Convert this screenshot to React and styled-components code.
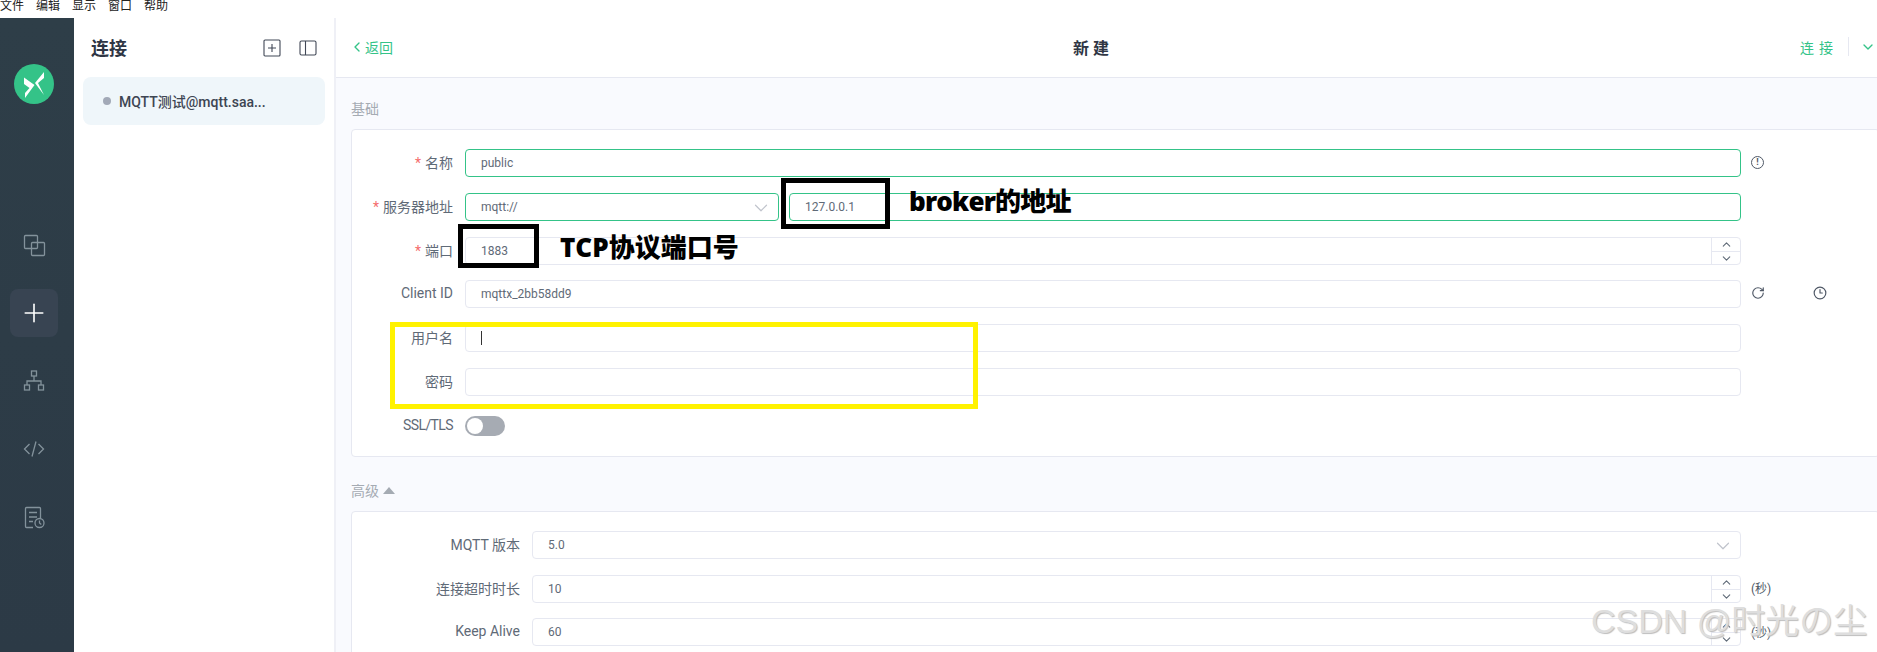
import React from "react";
import styled, { createGlobalStyle } from "styled-components";
import { ChevronLeft, ChevronDown, ChevronUp, RotateCw, Clock3, Plus } from "lucide-react";

const sans = `Roboto, "Noto Sans CJK SC", sans-serif`;

const GlobalStyle = createGlobalStyle`
  html, body {
    margin: 0;
    padding: 0;
    background: #fff;
    font-family: ${sans};
  }
  * {
    box-sizing: border-box;
  }
`;

const Page = styled.div`
  position: relative;
  width: 1877px;
  height: 652px;
  overflow: hidden;
  display: flex;
  flex-direction: column;
`;

const MenuBar = styled.div`
  height: 18px;
  flex: none;
  display: flex;
  background: #fff;
  overflow: hidden;
`;

const MenuItem = styled.span`
  width: 36px;
  font-size: 12px;
  line-height: 12px;
  color: #222;
`;

const Shell = styled.div`
  flex: 1;
  display: flex;
  min-height: 0;
`;

const Sidebar = styled.div`
  width: 74px;
  flex: none;
  display: flex;
  flex-direction: column;
  align-items: center;
  background: linear-gradient(180deg, #2e3e48 0%, #2c3a46 100%);
  padding: 46px 6px 0 0;
`;

const Logo = styled.svg`
  width: 40px;
  height: 40px;
  margin-bottom: 117px;
`;

const NavButton = styled.div`
  width: 48px;
  height: 48px;
  margin-bottom: 20px;
  border-radius: 8px;
  display: flex;
  align-items: center;
  justify-content: center;
  color: ${(p) => (p.$active ? "#fff" : "#83929b")};
  background: ${(p) => (p.$active ? "#384452" : "transparent")};
`;

const NavIcon = styled.svg`
  width: 24px;
  height: 24px;
  fill: none;
  stroke: currentColor;
  stroke-width: 1.3;
`;

const ListPanel = styled.div`
  width: 260px;
  flex: none;
  background: #fff;
  padding: 0 9px;
`;

const ListHeader = styled.div`
  height: 59px;
  display: flex;
  align-items: center;
  padding: 0 8px;
`;

const ListTitle = styled.h1`
  flex: 1;
  margin: 0 0 2px;
  font-size: 18px;
  font-weight: 700;
  color: #2f3644;
`;

const HeadIcon = styled.svg`
  width: 18px;
  height: 18px;
  margin-left: 18px;
  fill: none;
  stroke: #414856;
  stroke-width: 1.1;
`;

const ConnItem = styled.div`
  height: 48px;
  border-radius: 8px;
  background: #eff6fa;
  display: flex;
  align-items: center;
  padding-left: 20px;
  font-size: 14px;
  font-weight: 500;
  color: #3d4552;
`;

const StatusDot = styled.i`
  width: 8px;
  height: 8px;
  margin-right: 8px;
  border-radius: 50%;
  background: #a2a9b7;
`;

const Main = styled.div`
  flex: 1;
  min-width: 0;
  display: flex;
  flex-direction: column;
  border-left: 2px solid #eff0f6;
  background: #f9fafe;
`;

const TopBar = styled.div`
  height: 60px;
  flex: none;
  display: grid;
  grid-template-columns: 724px auto 1fr;
  align-items: center;
  background: #fff;
  border-bottom: 1px solid #e6e8f1;
  padding: 0 1px 2px 13px;
`;

const BackLink = styled.div`
  display: flex;
  align-items: center;
  font-size: 14px;
  color: #34c388;
`;

const PageTitle = styled.div`
  font-size: 16px;
  font-weight: 700;
  letter-spacing: 4px;
  color: #2f3644;
`;

const ConnectArea = styled.div`
  display: flex;
  align-items: center;
  justify-content: flex-end;
  font-size: 14px;
  letter-spacing: 5px;
  color: #34c388;
`;

const Separator = styled.span`
  width: 1px;
  height: 19px;
  margin: 0 11px 0 10px;
  background: #e6e8f1;
`;

const Body = styled.div`
  flex: 1;
  min-height: 0;
  padding: 21px 0 0 15px;
`;

const SectionLabel = styled.div`
  height: 20px;
  margin: ${(p) => (p.$advanced ? "24px 0 10px" : "0 0 10px")};
  display: flex;
  align-items: center;
  gap: 4px;
  font-size: 14px;
  line-height: 20px;
  color: #a5abb3;
`;

const Caret = styled.i`
  width: 0;
  height: 0;
  border-left: 6px solid transparent;
  border-right: 6px solid transparent;
  border-bottom: 7px solid #a5abb3;
`;

const Card = styled.div`
  margin-right: -3px;
  padding: 19px 0 16px;
  display: flex;
  flex-direction: column;
  gap: 15.8px;
  background: #fff;
  border: 1px solid #e6e8f1;
  border-radius: 4px;
`;

const Row = styled.div`
  display: grid;
  grid-template-columns: ${(p) => p.$labelWidth}px minmax(0, 1fr) 128px;
  column-gap: 10px;
  align-items: center;
  height: 28px;
`;

const Label = styled.div`
  margin-bottom: 2px;
  padding-right: 2px;
  text-align: right;
  font-size: 14px;
  letter-spacing: ${(p) => (p.$tight ? "-0.6px" : "0")};
  color: #5f6a77;
  white-space: nowrap;
`;

const Required = styled.span`
  color: #f56c6c;
  margin-right: 4px;
`;

const Fields = styled.div`
  display: flex;
  gap: 10px;
  min-width: 0;
`;

const Field = styled.div`
  position: relative;
  flex: ${(p) => (p.$width ? `0 0 ${p.$width}px` : "1")};
  height: 28px;
  display: flex;
  align-items: center;
  padding-left: 15px;
  border: 1px solid ${(p) => (p.$focus ? "#34c388" : "#e6e8f1")};
  border-radius: 4px;
  background: #fff;
  font-size: 12px;
  color: #5f6a77;
`;

const TextCaret = styled.i`
  width: 1px;
  height: 14px;
  background: #333;
`;

const SelectArrow = styled(ChevronDown)`
  position: absolute;
  right: 6px;
  top: 3px;
  width: 22px;
  height: 22px;
  color: #c0c4cc;
  stroke-width: 1.3;
`;

const Stepper = styled.div`
  position: absolute;
  top: 0;
  right: 0;
  bottom: 0;
  width: 29px;
  display: flex;
  flex-direction: column;
  border-left: 1px solid #e6e8f1;
`;

const StepButton = styled.div`
  flex: 1;
  display: flex;
  align-items: center;
  justify-content: center;
  color: #5f6a77;
  & + & {
    border-top: 1px solid #e6e8f1;
  }
`;

const Aux = styled.div`
  display: flex;
  align-items: center;
  gap: 48px;
  margin-bottom: 2px;
  color: #4f5866;
  font-size: 12px;
`;

const InfoMark = styled.span`
  width: 13px;
  height: 13px;
  border: 1.5px solid #4f5866;
  border-radius: 50%;
  font-size: 9px;
  line-height: 10px;
  font-weight: 700;
  text-align: center;
`;

const Toggle = styled.div`
  position: relative;
  width: 40px;
  height: 20px;
  border-radius: 10px;
  background: #a6abb3;
  &::after {
    content: "";
    position: absolute;
    left: 2px;
    top: 2px;
    width: 16px;
    height: 16px;
    border-radius: 50%;
    background: #fff;
  }
`;

const Frame = styled.div`
  position: absolute;
  left: ${(p) => p.$x}px;
  top: ${(p) => p.$y}px;
  width: ${(p) => p.$w}px;
  height: ${(p) => p.$h}px;
  border: 5px solid ${(p) => p.$color};
`;

const Note = styled.div`
  position: absolute;
  left: ${(p) => p.$x}px;
  top: ${(p) => p.$y}px;
  font-size: 26px;
  line-height: 32px;
  font-weight: 800;
  letter-spacing: ${(p) => (p.$tight ? "-0.8px" : "0")};
  color: #000;
  font-family: "Open Sans", "Noto Sans CJK SC", sans-serif;
  white-space: nowrap;
`;

const Watermark = styled.div`
  position: absolute;
  left: 1591px;
  top: 599px;
  font-size: 34px;
  line-height: 44px;
  font-family: "Liberation Sans", "Noto Sans CJK JP", sans-serif;
  color: #dedede;
  text-shadow: 1px 1px 1px #bdbdbd;
  white-space: nowrap;
`;

const navIcons = [
  <>
    <rect x="2.5" y="2.5" width="13" height="13" rx="1" />
    <rect x="9.5" y="9.5" width="13" height="13" rx="1" />
  </>,
  null,
  <>
    <rect x="9.5" y="2" width="5" height="5" />
    <rect x="2.5" y="16" width="5" height="5" />
    <rect x="16.5" y="16" width="5" height="5" />
    <path d="M12 7v5M5 16v-4h14v4" />
  </>,
  <path d="M7.5 7L2.5 12l5 5M16.5 7l5 5-5 5M14 4.5L10 19.5" />,
  <>
    <path d="M11 22.5H4.5a1 1 0 0 1-1-1V3.5a1 1 0 0 1 1-1h13a1 1 0 0 1 1 1v9.5" />
    <path d="M7 7.500h8M7 12h8M7 16.500h4" />
    <circle cx="17.5" cy="18" r="4.5" />
    <path d="M17.500 15.500V18l1.800 1.500" />
  </>,
];

function NumberSteps() {
  return (
    <Stepper>
      <StepButton>
        <ChevronUp size={13} />
      </StepButton>
      <StepButton>
        <ChevronDown size={13} />
      </StepButton>
    </Stepper>
  );
}

export default function App() {
  return (
    <Page>
      <GlobalStyle />
      <MenuBar>
        {["文件", "编辑", "显示", "窗口", "帮助"].map((m) => (
          <MenuItem key={m}>{m}</MenuItem>
        ))}
      </MenuBar>
      <Shell>
        <Sidebar>
          <Logo viewBox="0 0 40 40">
            <circle cx="20" cy="20" r="20" fill="#34c388" />
            <path d="M10 13.500L20.500 21L11 34V29L15.500 24L10 20Z" fill="#fff" />
            <path d="M30 8V14L24 19L30 31L21 19Z" fill="#fff" />
          </Logo>
          {navIcons.map((icon, i) => (
            <NavButton key={i} $active={i === 1}>
              {icon ? <NavIcon viewBox="0 0 24 24">{icon}</NavIcon> : <Plus size={30} strokeWidth={1.3} />}
            </NavButton>
          ))}
        </Sidebar>
        <ListPanel>
          <ListHeader>
            <ListTitle>连接</ListTitle>
            <HeadIcon viewBox="0 0 18 18">
              <rect x="1" y="1" width="16" height="16" rx="1" />
              <path d="M9 5v8M5 9h8" />
            </HeadIcon>
            <HeadIcon viewBox="0 0 18 18">
              <rect x="1" y="2" width="16" height="14" rx="1.500" />
              <path d="M6.500 2v14" />
            </HeadIcon>
          </ListHeader>
          <ConnItem>
            <StatusDot />
            MQTT测试@mqtt.saa...
          </ConnItem>
        </ListPanel>
        <Main>
          <TopBar>
            <BackLink>
              <ChevronLeft size={16} />
              返回
            </BackLink>
            <PageTitle>新建</PageTitle>
            <ConnectArea>
              连接
              <Separator />
              <ChevronDown size={16} />
            </ConnectArea>
          </TopBar>
          <Body>
            <SectionLabel>基础</SectionLabel>
            <Card>
              <Row $labelWidth={103}>
                <Label>
                  <Required>*</Required>名称
                </Label>
                <Fields>
                  <Field $focus>public</Field>
                </Fields>
                <Aux>
                  <InfoMark>!</InfoMark>
                </Aux>
              </Row>
              <Row $labelWidth={103}>
                <Label>
                  <Required>*</Required>服务器地址
                </Label>
                <Fields>
                  <Field $focus $width={314}>
                    mqtt://
                    <SelectArrow />
                  </Field>
                  <Field $focus>127.0.0.1</Field>
                </Fields>
              </Row>
              <Row $labelWidth={103}>
                <Label>
                  <Required>*</Required>端口
                </Label>
                <Fields>
                  <Field>
                    1883
                    <NumberSteps />
                  </Field>
                </Fields>
              </Row>
              <Row $labelWidth={103}>
                <Label>Client ID</Label>
                <Fields>
                  <Field>mqttx_2bb58dd9</Field>
                </Fields>
                <Aux>
                  <RotateCw size={14} strokeWidth={2} />
                  <Clock3 size={14} strokeWidth={2} />
                </Aux>
              </Row>
              <Row $labelWidth={103}>
                <Label>用户名</Label>
                <Fields>
                  <Field>
                    <TextCaret />
                  </Field>
                </Fields>
              </Row>
              <Row $labelWidth={103}>
                <Label>密码</Label>
                <Fields>
                  <Field />
                </Fields>
              </Row>
              <Row $labelWidth={103}>
                <Label $tight>SSL/TLS</Label>
                <Toggle />
              </Row>
            </Card>
            <SectionLabel $advanced>
              高级
              <Caret />
            </SectionLabel>
            <Card>
              <Row $labelWidth={170}>
                <Label>MQTT 版本</Label>
                <Fields>
                  <Field>
                    5.0
                    <SelectArrow />
                  </Field>
                </Fields>
              </Row>
              <Row $labelWidth={170}>
                <Label>连接超时时长</Label>
                <Fields>
                  <Field>
                    10
                    <NumberSteps />
                  </Field>
                </Fields>
                <Aux>(秒)</Aux>
              </Row>
              <Row $labelWidth={170}>
                <Label>Keep Alive</Label>
                <Fields>
                  <Field>
                    60
                    <NumberSteps />
                  </Field>
                </Fields>
                <Aux>(秒)</Aux>
              </Row>
            </Card>
          </Body>
        </Main>
      </Shell>
      <Frame $x={781} $y={178} $w={109} $h={51} $color="#000" />
      <Frame $x={458} $y={224} $w={81} $h={44} $color="#000" />
      <Frame $x={390} $y={322} $w={588} $h={87} $color="#fff200" />
      <Note $x={909} $y={185} $tight>
        broker的地址
      </Note>
      <Note $x={560} $y={231}>TCP协议端口号</Note>
      <Watermark>CSDN @时光の尘</Watermark>
    </Page>
  );
}
